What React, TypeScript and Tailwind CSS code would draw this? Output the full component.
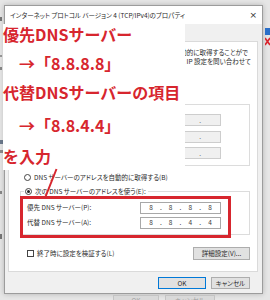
import React from "react";

const ui =
  "font-['Noto_Sans_CJK_JP',sans-serif] [font-feature-settings:'palt'] text-[6.5px] leading-[9px] text-[#2a2a2a] whitespace-nowrap";

const redText =
  "font-['Noto_Sans_CJK_JP',sans-serif] font-bold text-[16px] leading-[16px] text-[#d7262e] whitespace-nowrap";

function IpField({ value, disabled }: { value: string[]; disabled?: boolean }) {
  const slots: React.ReactNode[] = [];
  value.forEach((v, i) => {
    slots.push(
      <span key={"d" + i} className="w-[4px] text-center">
        {v}
      </span>
    );
    if (i < 3)
      slots.push(
        <span key={"p" + i} className="w-[3px] text-center">
          .
        </span>
      );
  });
  return (
    <div
      className={
        disabled
          ? "w-[81px] h-[12px] border border-[#cdcdcd] bg-[#f0f0f0] flex items-center justify-between pl-[8px] pr-[8px] font-['Noto_Sans_CJK_JP',sans-serif] text-[6.5px] leading-[9px] text-[#6d6d6d]"
          : "w-[81px] h-[11.5px] border border-[#a8a8a8] bg-white flex items-center justify-between pl-[8px] pr-[8px] font-['Noto_Sans_CJK_JP',sans-serif] text-[6.5px] leading-[9px] text-[#3a3a3a]"
      }
    >
      {slots}
    </div>
  );
}

function Radio({ checked }: { checked?: boolean }) {
  return (
    <span className="w-[7px] h-[7px] rounded-full border border-[#444] bg-white flex items-center justify-center shrink-0">
      {checked ? <span className="w-[3px] h-[3px] rounded-full bg-[#222]" /> : null}
    </span>
  );
}

function Dialog() {
  return (
    <div className="mt-[5px] w-[259px] h-[289px] border border-[#9c9c9c] bg-[#f0f0f0] flex flex-col shadow-[0_0_5px_rgba(0,0,0,0.22)]">
      {/* title bar */}
      <div className="h-[18px] bg-white flex items-center justify-between pl-[5px] pr-[5px]">
        <span className={ui}>インターネット プロトコル バージョン 4 (TCP/IPv4)のプロパティ</span>
        <span className="font-['DejaVu_Sans',sans-serif] text-[9px] leading-[9px] text-[#333]">×</span>
      </div>
      {/* body */}
      <div className="flex-1 flex flex-col pl-[3px] pr-[4px] pt-[17px]">
        <div className="h-[231px] bg-white border border-[#dadada] flex flex-col">
          {/* description (left part hidden under the annotation) */}
          <div className="pt-[6px] flex flex-col items-end">
            <div className={"pr-[9px] " + ui}>動的に取得することがで</div>
            <div className={"pr-[6px] " + ui}>: IP 設定を問い合わせて</div>
          </div>
          {/* IP group (labels hidden under the annotation) */}
          <div className="mt-[38px] ml-[11px] w-[230px] h-[62px] border border-[#dcdcdc] flex flex-col">
            <div className="mt-[9px] flex flex-col gap-[4.5px] items-end pr-[28px]">
              <IpField value={["", "", "", ""]} disabled />
              <IpField value={["", "", "", ""]} disabled />
              <IpField value={["", "", "", ""]} disabled />
            </div>
          </div>
          {/* DNS auto radio */}
          <div className="mt-[6px] h-[10px] pl-[15px] flex items-center gap-[3px]">
            <Radio />
            <span className={ui}>DNS サーバーのアドレスを自動的に取得する(B)</span>
          </div>
          {/* DNS group */}
          <div className="mt-[9px] ml-[11px] w-[230px] h-[44px] border border-[#dcdcdc] flex flex-col">
            <div className="-mt-[6px] h-[10px] pl-[3px] flex items-center">
              <span className="bg-white flex items-center gap-[3px] pl-[1px] pr-[2px]">
                <Radio checked />
                <span className={ui}>次の DNS サーバーのアドレスを使う(E):</span>
              </span>
            </div>
            <div className="mt-[6px] flex flex-col gap-[3.5px]">
              <div className="flex items-center justify-between pl-[6px] pr-[28px]">
                <span className={ui}>優先 DNS サーバー(P):</span>
                <IpField value={["8", "8", "8", "8"]} />
              </div>
              <div className="flex items-center justify-between pl-[6px] pr-[28px]">
                <span className={ui}>代替 DNS サーバー(A):</span>
                <IpField value={["8", "8", "4", "4"]} />
              </div>
            </div>
          </div>
          {/* checkbox + advanced */}
          <div className="mt-[12px] flex items-center justify-between pl-[18px] pr-[7px]">
            <div className="flex items-center gap-[3px]">
              <span className="w-[7px] h-[7px] border border-[#444] bg-white" />
              <span className={ui}>終了時に設定を検証する(L)</span>
            </div>
            <div className={"w-[57px] h-[13px] bg-[#e1e1e1] border border-[#adadad] flex items-center justify-center " + ui}>
              詳細設定(V)...
            </div>
          </div>
        </div>
        {/* bottom buttons */}
        <div className="mt-[5px] flex justify-end gap-[5px] pr-[8px]">
          <div className={"w-[48px] h-[12px] bg-[#e1e1e1] border border-[#0078d7] flex items-center justify-center " + ui}>
            OK
          </div>
          <div className={"w-[39px] h-[12px] bg-[#e1e1e1] border border-[#adadad] flex items-center justify-center " + ui}>
            キャンセル
          </div>
        </div>
      </div>
    </div>
  );
}

export default function App() {
  return (
    <div className="w-[270px] h-[300px] bg-[#e6e6e6] relative overflow-hidden flex flex-col">
      <div className="flex h-[294px] shrink-0">
        {/* left strip of window behind */}
        <div className="w-[4px] flex flex-col items-start">
          <span className="mt-[17px] w-[2px] h-[4px] bg-[#777]" />
          <span className="mt-[34px] w-[2px] h-[2px] bg-[#999]" />
          <span className="mt-[10px] w-[2px] h-[3px] bg-[#888]" />
          <span className="mt-[70px] w-[3px] h-[4px] bg-[#6c7a8c]" />
          <span className="mt-[6px] w-[3px] h-[3px] bg-[#8a8a8a]" />
          <span className="mt-[38px] w-[2px] h-[3px] bg-[#888]" />
          <span className="mt-[40px] w-[2px] h-[5px] bg-[#777]" />
        </div>
        <Dialog />
        {/* right strip of window behind */}
        <div className="w-[7px] flex flex-col items-end">
          <span className="mt-[28px] w-[5px] h-[7px] bg-[#2a6fc9]" />
          <svg width="5" height="9" viewBox="0 0 5 9" className="mt-[2px]">
            <path d="M0 1 L5 8 M5 1 L0 8" stroke="#d9262e" strokeWidth="1.6" />
          </svg>
        </div>
      </div>
      {/* bottom strip of window behind */}
      <div className="flex-1 overflow-hidden flex pl-[113px] gap-[6px]">
        <div className="w-[46px] h-[12px] mt-[1px] bg-[#d9d9d9] border border-[#c4c4c4] flex justify-center font-['Noto_Sans_CJK_JP',sans-serif] text-[6.5px] leading-[9px] text-[#a0a0a0]">
          OK
        </div>
        <div className="w-[50px] h-[12px] mt-[1px] bg-[#d9d9d9] border border-[#c4c4c4] flex justify-center font-['Noto_Sans_CJK_JP',sans-serif] [font-feature-settings:'palt'] text-[6.5px] leading-[9px] text-[#a0a0a0]">
          キャンセル
        </div>
      </div>

      {/* annotation: white box with red text */}
      <div className="absolute left-[3px] top-[24px] w-[182px] h-[146px] bg-white flex flex-col">
        <div className={"mt-[2px] " + redText}>優先DNSサーバー</div>
        <div className={"mt-[13px] " + redText}>　→「8.8.8.8」</div>
        <div className={"mt-[13px] " + redText}>代替DNSサーバーの項目</div>
        <div className={"mt-[17px] " + redText}>　→「8.8.4.4」</div>
        <div className={"mt-[15px] " + redText}>を入力</div>
      </div>

      {/* annotation: pointer line */}
      <svg className="absolute left-0 top-0 pointer-events-none" width="270" height="300">
        <line x1="56.5" y1="169" x2="45" y2="198" stroke="#d7262e" strokeWidth="2" />
      </svg>

      {/* annotation: red frame */}
      <div className="absolute left-[20px] top-[196px] w-[211px] h-[42px] border-[3px] border-[#d7262e]" />
    </div>
  );
}
